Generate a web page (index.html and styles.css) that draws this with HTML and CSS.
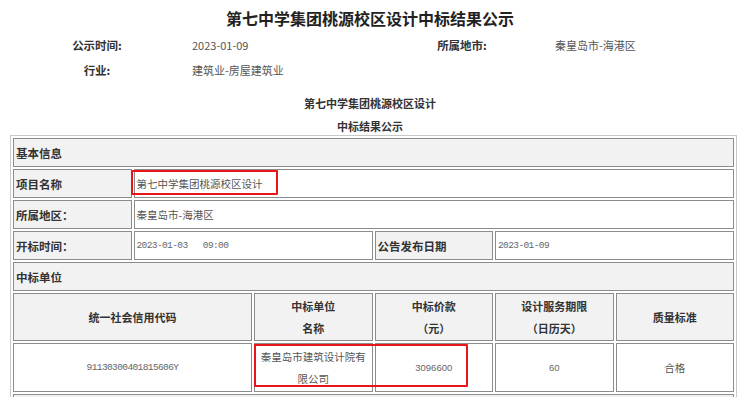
FILE: index.html
```html
<!DOCTYPE html>
<html lang="zh-CN">
<head>
<meta charset="utf-8">
<link rel="stylesheet" href="styles.css">
</head>
<body>
<div class="page">
  <h1 class="title">第七中学集团桃源校区设计中标结果公示</h1>
  <div class="meta">
    <div class="meta-label">公示时间:</div>
    <div class="meta-value">2023-01-09</div>
    <div class="meta-label">所属地市:</div>
    <div class="meta-value">秦皇岛市-海港区</div>
    <div class="meta-label">行业:</div>
    <div class="meta-value">建筑业-房屋建筑业</div>
  </div>
  <div class="subtitle">
    <p>第七中学集团桃源校区设计</p>
    <p>中标结果公示</p>
  </div>
  <div class="table-wrap">
    <table class="info">
      <colgroup>
        <col><col><col><col><col><col>
      </colgroup>
      <tr><td class="head" colspan="6">基本信息</td></tr>
      <tr><td class="head">项目名称</td><td class="val" colspan="5">第七中学集团桃源校区设计</td></tr>
      <tr><td class="head">所属地区：</td><td class="val" colspan="5">秦皇岛市-海港区</td></tr>
      <tr><td class="head">开标时间：</td><td class="val mono" colspan="2">2023-01-03&nbsp;&nbsp;&nbsp;09:00</td><td class="head">公告发布日期</td><td class="val mono" colspan="2">2023-01-09</td></tr>
      <tr><td class="head" colspan="6">中标单位</td></tr>
      <tr class="colhead">
        <td class="head center" colspan="2">统一社会信用代码</td>
        <td class="head center">中标单位<br>名称</td>
        <td class="head center">中标价款<br>（元）</td>
        <td class="head center">设计服务期限<br>（日历天）</td>
        <td class="head center">质量标准</td>
      </tr>
      <tr class="data">
        <td class="val center mono" colspan="2">91130300401815606Y</td>
        <td class="val center">秦皇岛市建筑设计院有<br>限公司</td>
        <td class="val center num">3096600</td>
        <td class="val center num">60</td>
        <td class="val center">合格</td>
      </tr>
      <tr class="more"><td class="head" colspan="6"></td></tr>
    </table>
    <div class="mark mark-name"></div>
    <div class="mark mark-winner"></div>
  </div>
</div>
</body>
</html>
```

FILE: styles.css
```css
html, body {
  margin: 0;
  padding: 0;
  background: #fff;
}
body {
  font-family: "Noto Sans CJK SC", "Noto Sans", sans-serif;
  color: #333;
}
.page {
  width: 740px;
  height: 397px;
  overflow: hidden;
  position: relative;
}
.title {
  margin: 0;
  padding-top: 6px;
  height: 26px;
  line-height: 24px;
  font-size: 16px;
  font-weight: 700;
  text-align: center;
  color: #222;
}
.meta {
  display: grid;
  grid-template-columns: 154px 226px 124px auto;
  grid-auto-rows: 25px;
  padding-left: 20px;
  margin-top: 1px;
  font-size: 11.5px;
  line-height: 25px;
}
.meta-label {
  text-align: center;
  font-weight: 700;
  color: #333;
}
.meta-value {
  padding-left: 18px;
  color: #555;
  font-size: 11px;
}
.meta-value:nth-child(4) {
  padding-left: 31px;
}
.subtitle {
  margin-top: 9px;
  text-align: center;
  font-size: 11px;
  font-weight: 700;
  color: #333;
}
.subtitle p {
  margin: 0;
  height: 23px;
  line-height: 23px;
}
.table-wrap {
  position: relative;
  margin: -3px 3px 0 10px;
}
.info {
  width: 727px;
  table-layout: fixed;
  border-collapse: separate;
  border-spacing: 2px;
  border: 1px solid #c9c9c9;
  border-bottom: none;
  font-size: 11px;
}
.info td {
  border: 1px solid #8c8c8c;
  height: 27px;
  padding: 0 0 0 2px;
  line-height: 20px;
  vertical-align: middle;
}
.info td.head {
  background: #f2f2f2;
  font-weight: 700;
  font-size: 11.5px;
  color: #333;
}
.info td.val {
  background: #fff;
  color: #555;
  font-size: 10.5px;
}
.info td.center {
  text-align: center;
  padding-left: 0;
}
.info .colhead td.head {
  font-size: 11px;
}
.info td.mono {
  font-family: "Liberation Mono", "DejaVu Sans Mono", monospace;
  font-size: 9.5px;
  letter-spacing: -0.6px;
  color: #666;
}
.info td.num {
  font-family: "Liberation Sans", Arial, sans-serif;
  font-size: 9.5px;
  color: #666;
}
.colhead td {
  height: 46px;
  line-height: 22px;
}
.data td {
  height: 47px;
  line-height: 22px;
}
.mark {
  position: absolute;
  border: 2px solid #e8161b;
  border-radius: 1px;
}
.mark-name {
  left: 121px;
  top: 35px;
  width: 143px;
  height: 21px;
}
.mark-winner {
  left: 244px;
  top: 209px;
  width: 210px;
  height: 39px;
}
```
